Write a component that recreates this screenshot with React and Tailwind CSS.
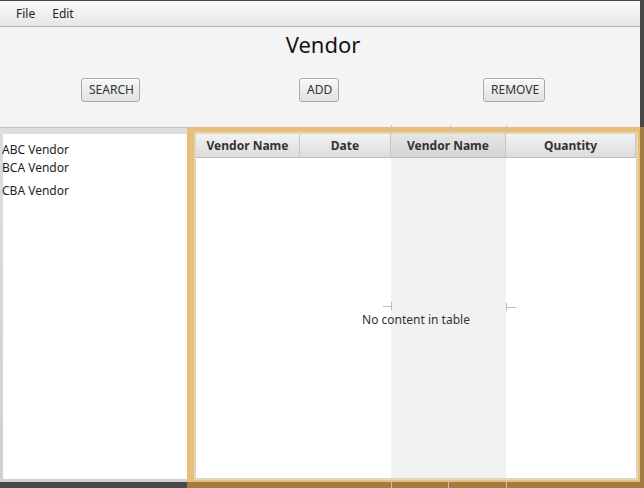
import React from 'react';

const vendors = ['ABC Vendor', 'BCA Vendor', 'CBA Vendor'];

const columns = [
  { label: 'Vendor Name', width: 'w-[104px]' },
  { label: 'Date', width: 'w-[91px]' },
  { label: 'Vendor Name', width: 'w-[115px]', active: true },
  { label: 'Quantity', width: 'flex-1' },
];

const Button = ({ children, className = '' }) => (
  <button
    className={`h-[24px] px-[7px] rounded-[3px] border border-[#a9a9a9] bg-gradient-to-b from-[#f7f7f7] to-[#e1e1e1] text-[12px] text-[#333] leading-none shadow-[inset_0_1px_0_#ffffff] ${className}`}
  >
    {children}
  </button>
);

const App = () => {
  return (
    <div className="relative w-[644px] h-[488px] overflow-hidden bg-[#484848] flex flex-col font-['Noto_Sans','Open_Sans',sans-serif]">
      <div className="h-[1px]" />

      <div className="flex h-[481px]">
        {/* window */}
        <div className="w-[640px] flex flex-col">
          {/* menu bar */}
          <div className="h-[26px] flex items-center gap-[17px] pl-[16px] bg-gradient-to-b from-[#fafafa] to-[#e7e7e7] border-b border-[#b4b4b4] text-[12px] text-[#222]">
            <span>File</span>
            <span>Edit</span>
          </div>

          {/* header panel */}
          <div className="h-[100px] bg-[#f4f4f4] flex flex-col">
            <h1 className="mt-[3px] ml-[6px] h-[28px] text-center text-[22px] leading-[28px] text-[#141414]">Vendor</h1>
            <div className="mt-[20px] flex items-center">
              <Button className="ml-[81px] w-[59px]">SEARCH</Button>
              <Button className="ml-[159px] w-[40px]">ADD</Button>
              <Button className="ml-[144px] w-[62px]">REMOVE</Button>
            </div>
          </div>

          {/* content */}
          <div className="flex-1 flex">
            {/* vendor list */}
            <div className="w-[187px] flex flex-col border-t border-[#c4c4c4] bg-gradient-to-b from-[#dedede] to-[#d0d0d0] pt-[6px] pl-[3px] pb-[3px]">
              <div className="flex-1 bg-white pt-[7px] text-[12px] text-[#1e1e1e]">
                <div className="leading-[18px] -ml-[1px]">{vendors[0]}</div>
                <div className="leading-[18px] -ml-[1px]">{vendors[1]}</div>
                <div className="mt-[5px] leading-[18px] -ml-[1px]">{vendors[2]}</div>
              </div>
            </div>

            {/* table with focus ring */}
            <div className="flex-1 flex bg-[#e7bf7b] pt-[5px] pl-[7px] pr-[2px] pb-[2px]">
              <div className="flex-1 flex bg-[#f2d7a3] p-[1px]">
                <div className="flex-1 flex flex-col bg-white border border-[#d4d4d4]">
                  <div className="h-[24px] flex border-b border-[#bdbdbd] text-[12px] font-bold text-[#333]">
                    {columns.map((col, i) => (
                      <div
                        key={i}
                        className={`${col.width} flex items-center justify-center border-r border-[#c8c8c8] ${
                          col.active
                            ? 'bg-gradient-to-b from-[#e6e6e6] to-[#d4d4d4]'
                            : 'bg-gradient-to-b from-[#f3f3f3] to-[#dcdcdc]'
                        }`}
                      >
                        {col.label}
                      </div>
                    ))}
                  </div>
                  <div className="relative flex-1 flex">
                    <div className="w-[104px]" />
                    <div className="w-[91px]" />
                    <div className="w-[115px] bg-[#f2f2f2]" />
                    <div className="flex-1" />
                    <div className="absolute inset-0 pt-[4px] flex items-center justify-center text-[12px] text-[#333]">
                      No content in table
                    </div>
                  </div>
                </div>
              </div>
            </div>
          </div>
        </div>

        {/* outside right edge */}
        <div className="flex-1 flex flex-col">
          <div className="h-[126px]" />
          <div className="flex-1 bg-[#a07c40]" />
        </div>
      </div>

      <div className="flex-1 flex">
        <div className="w-[187px]" />
        <div className="flex-1 bg-[#a07c40]" />
      </div>

      {/* column resize guides */}
      <div className="absolute left-[391px] top-[125px] w-px h-[9px] bg-[#c2c2c2]" />
      <div className="absolute left-[450px] top-[125px] w-px h-[9px] bg-[#c2c2c2]" />
      <div className="absolute left-[506px] top-[125px] w-px h-[9px] bg-[#c2c2c2]" />
      <div className="absolute left-[383px] top-[306px] w-[8px] h-px bg-[#bdbdbd]" />
      <div className="absolute left-[391px] top-[302px] w-px h-[8px] bg-[#bdbdbd]" />
      <div className="absolute left-[506px] top-[307px] w-[10px] h-px bg-[#bdbdbd]" />
      <div className="absolute left-[506px] top-[303px] w-px h-[8px] bg-[#bdbdbd]" />
      <div className="absolute left-[391px] top-[480px] w-px h-[8px] bg-[#c2c2c2]" />
      <div className="absolute left-[448px] top-[480px] w-px h-[8px] bg-[#c2c2c2]" />
      <div className="absolute left-[506px] top-[480px] w-px h-[8px] bg-[#c2c2c2]" />
    </div>
  );
};

export default App;
